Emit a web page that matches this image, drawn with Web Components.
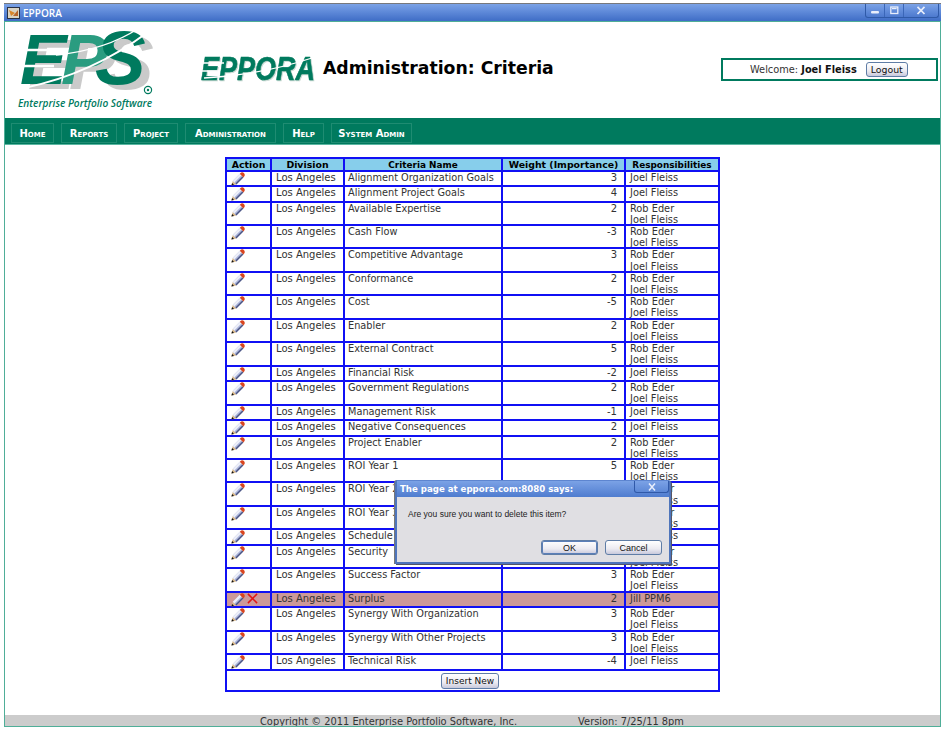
<!DOCTYPE html>
<html>
<head>
<meta charset="utf-8">
<title>EPPORA</title>
<style>
  html, body { margin: 0; height: 100%; background: #fff; }
  body { font-family: "DejaVu Sans", Verdana, sans-serif; color: #222; }
</style>
</head>
<body>
<app-window>
  <title-bar slot="bar">EPPORA</title-bar>
  <page-header slot="head"></page-header>
  <main-nav slot="nav"></main-nav>
  <criteria-table></criteria-table>
  <page-footer slot="foot"></page-footer>
  <confirm-dialog slot="over"></confirm-dialog>
</app-window>

<script>
const PENCIL = /* html */`
  <svg width="14" height="14" viewBox="0 0 14 14">
    <path d="M.4 13.6 L1.8 8.8 L5.4 12.4 Z" fill="#d9b98c"/>
    <path d="M.4 13.6 L1.1 11.1 L3 13 Z" fill="#111"/>
    <path d="M1.8 8.8 L8.8 1.8 L12.4 5.4 L5.4 12.4 Z" fill="#a9b2d8"/>
    <path d="M1.8 8.8 L8.8 1.8 L10.4 3.4 L3.4 10.4 Z" fill="#eceef8"/>
    <path d="M5.4 12.4 L12.4 5.4 L11.4 4.4 L4.4 11.4 Z" fill="#4c5684"/>
    <path d="M8.8 1.8 L10.2 .6 Q11.6 -.2 12.9 1.1 Q14.2 2.5 13.5 3.9 L12.4 5.4 Z" fill="#d9451f"/>
  </svg>`;

const CROSS = /* html */`
  <svg width="11" height="11" viewBox="0 0 12 12">
    <path d="M1 1 L11 11 M11 1 L1 11" stroke="#e01616" stroke-width="1.7" fill="none"/>
  </svg>`;

class AppWindow extends HTMLElement {
  constructor() {
    super();
    this.attachShadow({ mode: "open" });
    this.shadowRoot.innerHTML = /* html */`
    <style>
      :host {
        display: flex;
        flex-direction: column;
        height: 733px;
        box-sizing: border-box;
        padding: 3px 5px 6px 4px;
        position: relative;
      }
      .client {
        flex: 1;
        display: flex;
        flex-direction: column;
        border: 1px solid #4fae98;
        min-height: 0;
      }
      .content {
        flex: 1;
        display: flex;
        justify-content: center;
        align-items: flex-start;
        padding: 12px 0 0 0;
      }
    </style>
    <slot name="bar"></slot>
    <div class="client">
      <slot name="head"></slot>
      <slot name="nav"></slot>
      <div class="content"><slot></slot></div>
      <slot name="foot"></slot>
    </div>
    <slot name="over"></slot>`;
  }
}

class TitleBar extends HTMLElement {
  constructor() {
    super();
    this.attachShadow({ mode: "open" });
    this.shadowRoot.innerHTML = /* html */`
    <style>
      :host {
        display: flex;
        align-items: center;
        height: 18px;
        box-sizing: border-box;
        border-top: 1px solid #77787c;
        background: linear-gradient(#7ba2e6, #5f8ad9 45%, #3f6dc6);
        color: #fff;
        font: 600 10px "Open Sans", "Liberation Sans", sans-serif;
        padding: 0 2px 0 3px;
        gap: 3px;
      }
      .icon { width: 13px; height: 12px; flex: none; }
      .label { flex: 1; }
      .controls {
        display: flex;
        align-self: flex-start;
        height: 13px;
        border: 1px solid #2f5aa8;
        border-top: 0;
        border-radius: 0 0 3px 3px;
      }
      .controls span {
        display: grid;
        place-items: center;
        width: 18px;
        border-right: 1px solid #3a66b8;
      }
      .controls span:last-child { width: 34px; border-right: 0; }
    </style>
    <svg class="icon" viewBox="0 0 13 12">
      <rect width="13" height="12" fill="#2a3144"/>
      <rect x="1" y="1" width="11" height="10" fill="#d9d3c4"/>
      <path d="M2 3 L8 6 L4 9 Z" fill="#d8862c"/>
      <path d="M6 9 L11 3 L11 9 Z" fill="#b9662c"/>
    </svg>
    <span class="label"><slot></slot></span>
    <div class="controls">
      <span><svg width="9" height="9" viewBox="0 0 9 9"><rect x="0" y="5" width="8" height="2.4" rx="1" fill="#e8eefb"/></svg></span>
      <span><svg width="9" height="9" viewBox="0 0 9 9"><rect x=".8" y="1" width="7" height="6.5" fill="none" stroke="#e8eefb" stroke-width="1.3"/><rect x="2" y="2" width="4.6" height="1.2" fill="#e8eefb"/></svg></span>
      <span><svg width="10" height="9" viewBox="0 0 10 9"><path d="M1.5 .8 L8.5 8 M8.5 .8 L1.5 8" stroke="#e8eefb" stroke-width="1.7"/></svg></span>
    </div>`;
  }
}

class PageHeader extends HTMLElement {
  constructor() {
    super();
    this.attachShadow({ mode: "open" });
    this.shadowRoot.innerHTML = /* html */`
    <style>
      :host {
        display: flex;
        align-items: flex-start;
        height: 96px;
        background: #fff;
      }
      .eps { width: 146px; height: 90px; margin: 0 0 0 9px; flex: none; }
      .eppora { width: 118px; height: 30px; margin: 31px 0 0 40px; flex: none; }
      h1 {
        margin: 35px 0 0 5px;
        font: bold 17.25px/22px "DejaVu Sans", Verdana, sans-serif;
        color: #000;
        white-space: nowrap;
      }
      .welcome {
        margin: 36px 2px 0 auto;
        width: 217px;
        height: 23px;
        box-sizing: border-box;
        border: 2px solid #007a5e;
        display: flex;
        align-items: center;
        padding-left: 27px;
        font: 9.8px "DejaVu Sans", Verdana, sans-serif;
        color: #333;
        white-space: pre;
      }
      b { color: #111; }
      legacy-button { margin-left: 9px; --btn-font: 9.4px; }
    </style>
    <svg class="eps" viewBox="0 -6 146 90">
      <g style="filter: drop-shadow(8px 5px 0 #cacaca)">
        <text font-family="Liberation Sans, sans-serif" font-weight="700" font-style="italic" font-size="70" y="56" fill="#007a5e"><tspan x="6">E</tspan><tspan x="47" fill="#2a9c80">P</tspan><tspan x="81" font-size="76" fill="#007a5e">S</tspan></text>
      </g>
      <g stroke="#fff" fill="none">
        <path d="M4 22 H46 M2 38 H40" stroke-width="2.4"/>
        <path d="M10 60 Q78 46 134 4" stroke-width="2"/>
        <path d="M42 27 Q92 22 125 0" stroke-width="1.4"/>
      </g>
      <circle cx="134" cy="62" r="3.6" fill="none" stroke="#007a5e" stroke-width="1.2"/>
      <circle cx="134" cy="62" r="1.2" fill="#007a5e"/>
      <text x="4" y="79" font-family="Open Sans, sans-serif" font-style="italic" font-weight="600" font-size="11.5" fill="#007a5e" textLength="134" lengthAdjust="spacingAndGlyphs">Enterprise Portfolio Software</text>
    </svg>
    <svg class="eppora" viewBox="0 0 118 30">
      <g style="filter: drop-shadow(1px 1px 0 #c8d8d2)">
        <text x="1" y="27" font-family="Liberation Sans, sans-serif" font-weight="700" font-style="italic" font-size="33" fill="#007a5e" stroke="#007a5e" stroke-width=".6" textLength="114" lengthAdjust="spacingAndGlyphs">EPPORA</text>
      </g>
      <g stroke="#fff" fill="none" stroke-width="1.3">
        <path d="M0 10 H24 M0 18 H20"/>
        <path d="M4 25 Q60 22 112 5"/>
      </g>
    </svg>
    <h1>Administration: Criteria</h1>
    <div class="welcome">Welcome: <b>Joel Fleiss</b><legacy-button>Logout</legacy-button></div>`;
  }
}

class LegacyButton extends HTMLElement {
  constructor() {
    super();
    this.attachShadow({ mode: "open" });
    this.shadowRoot.innerHTML = /* html */`
    <style>
      :host {
        display: inline-grid;
        place-items: center;
        box-sizing: border-box;
        width: var(--btn-width, 42px);
        height: var(--btn-height, 15px);
        border: 1px solid #5f7da6;
        border-radius: 3px;
        background: linear-gradient(#fff, #ecebf1 60%, #c8c9dc);
        color: #111;
        font: var(--btn-font, 10px) var(--btn-family, "DejaVu Sans", Verdana, sans-serif);
      }
    </style>
    <slot></slot>`;
  }
}

class MainNav extends HTMLElement {
  constructor() {
    super();
    this.attachShadow({ mode: "open" });
    const items = [
      ["Home", 43], ["Reports", 56], ["Project", 54],
      ["Administration", 91], ["Help", 41], ["System Admin", 81],
    ];
    this.shadowRoot.innerHTML = /* html */`
    <style>
      :host {
        display: flex;
        align-items: flex-start;
        gap: 7px;
        height: 27px;
        box-sizing: border-box;
        padding: 5px 0 0 6px;
        background: #007a5e;
        border-bottom: 1px solid #5cb7a2;
      }
      a {
        display: grid;
        place-items: center;
        height: 20px;
        box-sizing: border-box;
        border: 1px solid #1f8c72;
        color: #fff;
        font: bold 10px "DejaVu Sans", Verdana, sans-serif;
        font-variant: small-caps;
        white-space: nowrap;
      }
    </style>
    ${items.map(([t, w]) => `<a style="width:${w}px">${t}</a>`).join("")}`;
  }
}

class CriteriaRow extends HTMLElement {
  constructor() {
    super();
    this.attachShadow({ mode: "open" });
  }
  connectedCallback() {
    const [name, weight, people, active] = this.data;
    const tall = people.length > 1;
    const bg = active ? "#cc9999" : "#fff";
    const h = tall ? "21.45px" : "13.5px";
    this.shadowRoot.innerHTML = /* html */`
    <style>
      :host { display: contents; }
      div {
        background: ${bg};
        height: ${h};
        padding: 0 0 0 3px;
        font-size: 10px;
        line-height: 11.2px;
        color: #333;
        white-space: nowrap;
        overflow: hidden;
      }
      .act { padding: 0 0 0 4px; display: flex; gap: 2px; align-items: flex-start; overflow: visible; }
      .act svg { flex: none; }
      .div { padding-left: 4px; }
      .name { font-size: 9.75px; }
      .num { text-align: right; padding: 0 7px 0 0; }
      .who { padding-left: 4px; font-size: 9.8px; }
    </style>
    <div class="act">${PENCIL}${active ? CROSS : ""}</div>
    <div class="div">Los Angeles</div>
    <div class="name">${name}</div>
    <div class="num">${weight}</div>
    <div class="who">${people.join("<br>")}</div>`;
  }
}

class CriteriaTable extends HTMLElement {
  constructor() {
    super();
    this.attachShadow({ mode: "open" });
    const both = ["Rob Eder", "Joel Fleiss"];
    const joel = ["Joel Fleiss"];
    this.rows = [
      ["Alignment Organization Goals", 3, joel],
      ["Alignment Project Goals", 4, joel],
      ["Available Expertise", 2, both],
      ["Cash Flow", -3, both],
      ["Competitive Advantage", 3, both],
      ["Conformance", 2, both],
      ["Cost", -5, both],
      ["Enabler", 2, both],
      ["External Contract", 5, both],
      ["Financial Risk", -2, joel],
      ["Government Regulations", 2, both],
      ["Management Risk", -1, joel],
      ["Negative Consequences", 2, joel],
      ["Project Enabler", 2, both],
      ["ROI Year 1", 5, both],
      ["ROI Year 2", 5, both],
      ["ROI Year 3", 5, both],
      ["Schedule", 2, joel],
      ["Security", 2, both],
      ["Success Factor", 3, both],
      ["Surplus", 2, ["Jill PPM6"], true],
      ["Synergy With Organization", 3, both],
      ["Synergy With Other Projects", 3, both],
      ["Technical Risk", -4, joel],
    ];
    this.shadowRoot.innerHTML = /* html */`
    <style>
      :host {
        display: block;
        width: 495px;
        box-sizing: border-box;
        background: #1010f4;
        padding: 2px;
      }
      .grid {
        display: grid;
        grid-template-columns: 43px 71px 156px 121px 92px;
        gap: 2px;
        background: #1010f4;
      }
      .head {
        background: #87ceeb;
        height: 10.5px;
        color: #000;
        font: bold 9.4px/12px "DejaVu Sans", Verdana, sans-serif;
        text-align: center;
        white-space: nowrap;
      }
      .narrow { font-size: 8.9px; }
      .foot {
        grid-column: 1 / -1;
        height: 19.5px;
        box-sizing: border-box;
        background: #fff;
        display: flex;
        justify-content: flex-end;
        align-items: flex-start;
        padding: 2px 219px 0 0;
        --btn-width: 58px;
        --btn-height: 16px;
        --btn-font: 9px;
      }
    </style>
    <div class="grid">
      <div class="head">Action</div>
      <div class="head">Division</div>
      <div class="head narrow">Criteria Name</div>
      <div class="head">Weight (Importance)</div>
      <div class="head narrow">Responsibilities</div>
      <slot-rows></slot-rows>
      <div class="foot"><legacy-button>Insert New</legacy-button></div>
    </div>`;
    const holder = this.shadowRoot.querySelector("slot-rows");
    holder.style.display = "contents";
    for (const r of this.rows) {
      const row = document.createElement("criteria-row");
      row.data = r;
      holder.appendChild(row);
    }
  }
}

class PageFooter extends HTMLElement {
  constructor() {
    super();
    this.attachShadow({ mode: "open" });
    this.shadowRoot.innerHTML = /* html */`
    <style>
      :host {
        display: flex;
        height: 11px;
        background: #cccccc;
        color: #333;
        font: 9.85px/13px "DejaVu Sans", Verdana, sans-serif;
        padding-left: 255px;
        gap: 61px;
        white-space: nowrap;
        overflow: hidden;
      }
    </style>
    <span>Copyright © 2011 Enterprise Portfolio Software, Inc.</span>
    <span>Version: 7/25/11 8pm</span>`;
  }
}

class ConfirmDialog extends HTMLElement {
  constructor() {
    super();
    this.attachShadow({ mode: "open" });
    this.shadowRoot.innerHTML = /* html */`
    <style>
      :host {
        position: absolute;
        left: 395px;
        top: 480px;
        width: 276px;
        height: 84px;
        box-sizing: border-box;
        display: flex;
        flex-direction: column;
        border: 2px solid #4f75bb;
        border-top: 1px solid #5d85d0;
        border-radius: 3px 3px 0 0;
        background: #e0dfe3;
        box-shadow: -1px 0 0 #777, 1px 1px 0 #556;
      }
      .bar {
        height: 16px;
        display: flex;
        align-items: center;
        justify-content: space-between;
        padding-left: 3px;
        background: linear-gradient(#7ba2e6, #4f7ccf);
        color: #fff;
        font: bold 8.6px "DejaVu Sans", Verdana, sans-serif;
      }
      .close {
        width: 33px;
        height: 11px;
        align-self: flex-start;
        display: grid;
        place-items: center;
        border: 1px solid #3059a8;
        border-top: 0;
        border-radius: 0 0 3px 3px;
      }
      .msg {
        padding: 11px 0 0 11px;
        font: 8.5px/12px "Liberation Sans", Arial, sans-serif;
        color: #222;
      }
      .btns {
        margin-top: auto;
        padding: 0 7px 7px 0;
        display: flex;
        justify-content: flex-end;
        gap: 7px;
        --btn-height: 15px;
        --btn-width: 57px;
        --btn-font: 9px;
        --btn-family: "Liberation Sans", Arial, sans-serif;
      }
      .ok { box-shadow: 0 0 0 1px #5b7fb8 inset; }
    </style>
    <div class="bar">The page at eppora.com:8080 says:
      <span class="close"><svg width="10" height="8" viewBox="0 0 10 8"><path d="M2 .5 L8 7.5 M8 .5 L2 7.5" stroke="#e8eefb" stroke-width="1.5"/></svg></span>
    </div>
    <div class="msg">Are you sure you want to delete this item?</div>
    <div class="btns">
      <legacy-button class="ok">OK</legacy-button>
      <legacy-button>Cancel</legacy-button>
    </div>`;
  }
}

customElements.define("legacy-button", LegacyButton);
customElements.define("title-bar", TitleBar);
customElements.define("page-header", PageHeader);
customElements.define("main-nav", MainNav);
customElements.define("criteria-row", CriteriaRow);
customElements.define("criteria-table", CriteriaTable);
customElements.define("page-footer", PageFooter);
customElements.define("confirm-dialog", ConfirmDialog);
customElements.define("app-window", AppWindow);
</script>
</body>
</html>
